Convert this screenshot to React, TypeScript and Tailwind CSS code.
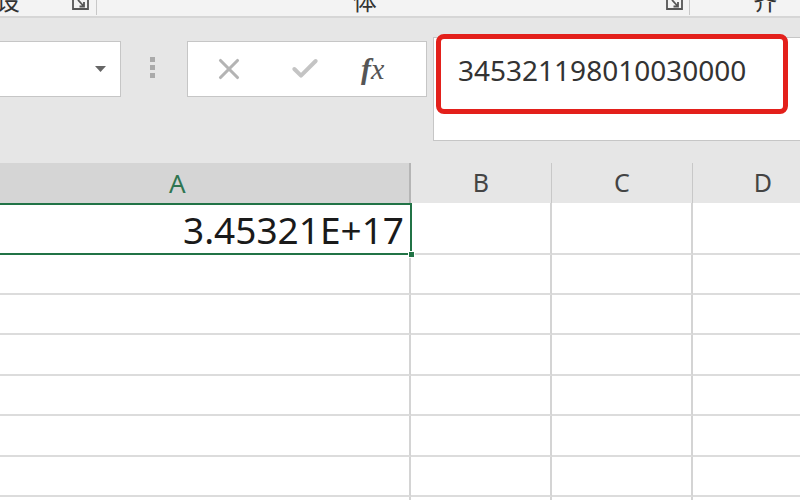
import { X, Check } from 'lucide-react';

const SANS = { fontFamily: '"Noto Sans", "Noto Sans CJK SC", sans-serif' };

function Launcher() {
  return (
    <svg width="18" height="13" viewBox="0 0 18 13" className="text-[#555]">
      <path d="M1 0 V10 H16 V0" fill="none" stroke="currentColor" strokeWidth="1.8" />
      <path d="M6 1 L12 7.5 M12 3 V7.5 H7.5" fill="none" stroke="currentColor" strokeWidth="1.8" />
    </svg>
  );
}

function RibbonStrip() {
  return (
    <div className="h-[18px] bg-[#f3f3f3] border-b-2 border-[#d6d6d6] flex items-end overflow-hidden text-[24px] leading-none text-[#333]" style={SANS}>
      <span className="ml-[-4px] mb-[3px]">设</span>
      <div className="ml-[52px] mb-[4px] flex items-end"><Launcher /></div>
      <div className="ml-[6px] w-px h-[15px] bg-[#c8c8c8] mb-[1px]" />
      <span className="ml-[256px] mb-[3px] tracking-[4px]">字体</span>
      <div className="ml-[266px] mb-[4px] flex items-end"><Launcher /></div>
      <div className="ml-[5px] w-px h-[15px] bg-[#c8c8c8] mb-[1px]" />
      <span className="ml-[64px] mb-[3px] tracking-[4px]">对齐</span>
    </div>
  );
}

function FormulaArea() {
  return (
    <div className="h-[145px] bg-[#e6e6e6] flex items-start">
      {/* name box */}
      <div className="mt-[23px] ml-[-1px] w-[122px] h-[56px] bg-white border border-[#c6c6c6] flex items-center justify-end pr-[14px]">
        <svg width="11" height="6" viewBox="0 0 11 6">
          <path d="M0 0 H11 L5.5 6 Z" fill="#666" />
        </svg>
      </div>
      {/* grip dots */}
      <div className="mt-[39px] ml-[29px] w-[6px] flex flex-col gap-[3px]">
        <div className="w-[5px] h-[5px] bg-[#aaa]" />
        <div className="w-[5px] h-[5px] bg-[#aaa]" />
        <div className="w-[5px] h-[5px] bg-[#aaa]" />
      </div>
      {/* buttons */}
      <div className="mt-[23px] ml-[31px] w-[240px] h-[56px] bg-white border border-[#c6c6c6] flex items-center">
        <X className="ml-[24px] text-[#b4b4b4]" size={34} strokeWidth={2.2} />
        <Check className="ml-[43px] text-[#c4c4c4]" size={32} strokeWidth={3} />
        <span className="ml-[40px] text-[30px] italic text-[#555] leading-none" style={{ fontFamily: '"Liberation Serif", serif' }}>
          <span className="font-semibold">f</span>x
        </span>
      </div>
      {/* formula input */}
      <div className="relative mt-[19px] ml-[6px] flex-1 h-[104px] bg-white border border-[#c6c6c6] border-r-0">
        <div className="pl-[24px] pt-[12px] text-[28px] text-[#333] leading-[40px]" style={SANS}>
          345321198010030000
        </div>
        <div className="absolute left-[2px] top-[-4px] w-[352px] h-[80px] border-[5px] border-[#e3201b] rounded-[8px]" />
      </div>
    </div>
  );
}

function HeaderRow() {
  const cell = 'shrink-0 h-full flex items-center justify-center border-r border-[#c8c8c8] text-[25px] text-[#444]';
  return (
    <div className="h-[40px] flex bg-[#e6e6e6] overflow-hidden" style={SANS}>
      <div className="shrink-0 w-[411px] h-full flex items-center pl-[169px] bg-[#d5d5d5] border-r-2 border-[#b5b5b5] text-[26px] text-[#2f7551]">A</div>
      <div className={`w-[141px] ${cell}`}>B</div>
      <div className={`w-[141px] ${cell}`}>C</div>
      <div className={`w-[141px] ${cell}`}>D</div>
    </div>
  );
}

const ROW_HEIGHTS = [40, 40, 41, 40, 41, 40, 10];

function GridRow({ h }: { h: number }) {
  const line = 'h-full border-b-2 border-[#dcdcdc]';
  return (
    <div className="flex" style={{ height: h }}>
      <div className={`w-[411px] border-r-2 border-r-[#d4d4d4] ${line}`} />
      <div className={`w-[141px] border-r-2 border-r-[#d4d4d4] ${line}`} />
      <div className={`w-[141px] border-r-2 border-r-[#d4d4d4] ${line}`} />
      <div className={`flex-1 ${line}`} />
    </div>
  );
}

export default function App() {
  return (
    <div className="w-[800px] h-[500px] overflow-hidden bg-white">
      <RibbonStrip />
      <FormulaArea />
      <HeaderRow />
      {/* row 1 with selected cell */}
      <div className="h-[52px] flex">
        <div className="relative w-[412px] h-full border-2 border-l-0 border-[#217346] flex items-center justify-end pr-[6px] text-[37px] text-[#1a1a1a] leading-none" style={SANS}>
          3.45321E+17
          <div className="absolute right-[-5px] bottom-[-5px] w-[7px] h-[7px] bg-[#217346] border border-white" />
        </div>
        <div className="w-[140px] h-full border-r-2 border-r-[#d4d4d4] border-b-2 border-[#dcdcdc]" />
        <div className="w-[141px] h-full border-r-2 border-r-[#d4d4d4] border-b-2 border-[#dcdcdc]" />
        <div className="flex-1 h-full border-b-2 border-[#dcdcdc]" />
      </div>
      {ROW_HEIGHTS.map((h, i) => (
        <GridRow key={i} h={h} />
      ))}
    </div>
  );
}
